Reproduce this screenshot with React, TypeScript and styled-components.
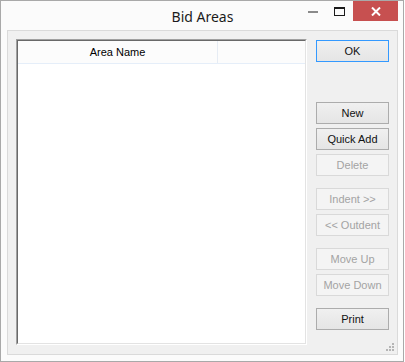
import React from "react";
import styled, { createGlobalStyle } from "styled-components";

const Global = createGlobalStyle`
  html, body { margin: 0; padding: 0; background: #ffffff; }
  body { width: 405px; height: 362px; overflow: hidden; }
`;

const Frame = styled.div`
  width: 404px;
  height: 362px;
  box-sizing: border-box;
  border: 1px solid #a9a9a9;
  background: #fbfbfb;
  display: flex;
  flex-direction: column;
  padding: 0 5px 6px 6px;
`;

const TitleBar = styled.div`
  height: 29px;
  flex: none;
  position: relative;
  display: flex;
  align-items: center;
  justify-content: center;
`;

const Title = styled.div`
  font-family: "Noto Sans", "Open Sans", sans-serif;
  font-size: 14px;
  color: #1b1b1b;
  margin-top: 1px;
`;

const Controls = styled.div`
  position: absolute;
  right: 0;
  top: 0;
  display: flex;
  align-items: flex-start;
`;

const CtlBtn = styled.div<{ $w: number; $close?: boolean }>`
  width: ${(p) => p.$w}px;
  height: 20px;
  display: flex;
  align-items: center;
  justify-content: center;
  background: ${(p) => (p.$close ? "#c75050" : "transparent")};
`;

const Client = styled.div`
  flex: 1;
  position: relative;
  border: 1px solid #dadada;
  background: #f0f0f0;
  display: flex;
  padding: 8px 8px 9px 8px;
  gap: 9px;
`;

const ListOuter = styled.div`
  flex: 1;
  border: 1px solid;
  border-color: #a0a0a0 #ffffff #ffffff #a0a0a0;
  display: flex;
`;

const ListInner = styled.div`
  flex: 1;
  border: 1px solid;
  border-color: #696969 #e3e3e3 #e3e3e3 #696969;
  background: #ffffff;
  display: flex;
  flex-direction: column;
`;

const Header = styled.div`
  height: 22px;
  background: #fcfcfc;
  border-bottom: 1px solid #e5eef9;
  display: flex;
`;

const HeaderCell = styled.div<{ $w: number }>`
  width: ${(p) => p.$w}px;
  border-right: 1px solid #e6ecf4;
  display: flex;
  align-items: center;
  justify-content: center;
  font-family: "Liberation Sans", Arial, sans-serif;
  font-size: 11px;
  color: #000;
`;

const ButtonCol = styled.div`
  width: 73px;
  display: flex;
  flex-direction: column;
  padding-top: 1px;
`;

const Btn = styled.div<{ $gap: number; $disabled?: boolean; $default?: boolean }>`
  height: 22px;
  box-sizing: border-box;
  margin-top: ${(p) => p.$gap}px;
  border: 1px solid
    ${(p) => (p.$default ? "#3399ff" : p.$disabled ? "#d9d9d9" : "#acacac")};
  background: ${(p) =>
    p.$disabled ? "#f4f4f4" : "linear-gradient(#f0f0f0, #e5e5e5)"};
  color: ${(p) => (p.$disabled ? "#a3a3a3" : "#111")};
  font-family: "Liberation Sans", Arial, sans-serif;
  font-size: 11px;
  display: flex;
  align-items: center;
  justify-content: center;
`;

const Grip = styled.svg`
  position: absolute;
  right: 2px;
  bottom: 2px;
`;

const buttons: { label: string; gap: number; disabled?: boolean; def?: boolean }[] = [
  { label: "OK", gap: 0, def: true },
  { label: "New", gap: 40 },
  { label: "Quick Add", gap: 4 },
  { label: "Delete", gap: 4, disabled: true },
  { label: "Indent >>", gap: 12, disabled: true },
  { label: "<< Outdent", gap: 4, disabled: true },
  { label: "Move Up", gap: 12, disabled: true },
  { label: "Move Down", gap: 4, disabled: true },
  { label: "Print", gap: 12 },
];

export default function App() {
  return (
    <>
      <Global />
      <Frame>
        <TitleBar>
          <Title>Bid Areas</Title>
          <Controls>
            <CtlBtn $w={26}>
              <svg width="10" height="10" viewBox="0 0 10 10">
                <rect x="0" y="5" width="10" height="2" fill="#8a8a8a" />
              </svg>
            </CtlBtn>
            <CtlBtn $w={27}>
              <svg width="11" height="9" viewBox="0 0 11 9">
                <rect x="0.5" y="0.5" width="10" height="8" fill="none" stroke="#1a1a1a" />
                <rect x="0" y="0" width="11" height="2" fill="#1a1a1a" />
              </svg>
            </CtlBtn>
            <CtlBtn $w={45} $close>
              <svg width="10" height="9" viewBox="0 0 10 9">
                <path d="M1 0.5 L9 8.5 M9 0.5 L1 8.5" stroke="#fff" strokeWidth="2" />
              </svg>
            </CtlBtn>
          </Controls>
        </TitleBar>
        <Client>
          <ListOuter>
            <ListInner>
              <Header>
                <HeaderCell $w={199}>Area Name</HeaderCell>
              </Header>
            </ListInner>
          </ListOuter>
          <ButtonCol>
            {buttons.map((b) => (
              <Btn key={b.label} $gap={b.gap} $disabled={b.disabled} $default={b.def}>
                {b.label}
              </Btn>
            ))}
          </ButtonCol>
          <Grip width="9" height="9" viewBox="0 0 9 9">
            {[
              [6, 0],
              [3, 3],
              [6, 3],
              [0, 6],
              [3, 6],
              [6, 6],
            ].map(([x, y]) => (
              <rect key={`${x}-${y}`} x={x} y={y} width="2" height="2" fill="#b5b5b5" />
            ))}
          </Grip>
        </Client>
      </Frame>
    </>
  );
}
